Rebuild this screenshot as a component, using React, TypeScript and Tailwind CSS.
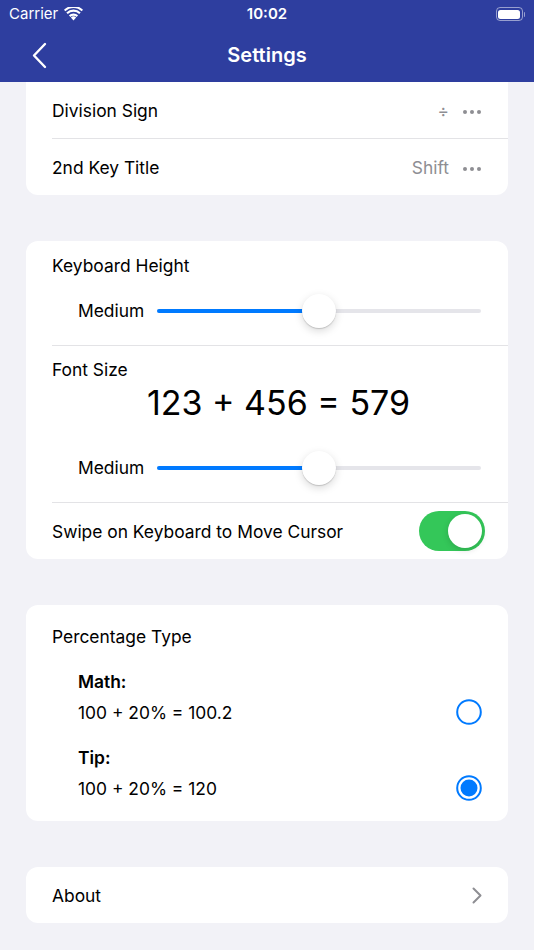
import React from "react";

const font = { fontFamily: "Inter, 'Noto Sans', sans-serif" };

function Slider({ value }: { value: number }) {
  return (
    <div className="relative h-[34px] flex-1 flex items-center">
      <div className="h-[4px] w-full rounded-full bg-[#e5e5ea]" />
      <div
        className="absolute left-0 h-[4px] rounded-full bg-[#007aff]"
        style={{ width: `${value * 100}%` }}
      />
      <div
        className="absolute h-[34px] w-[34px] -translate-x-1/2 rounded-full bg-white shadow-[0_3px_8px_rgba(0,0,0,0.15),0_1px_1px_rgba(0,0,0,0.16)]"
        style={{ left: `${value * 100}%` }}
      />
    </div>
  );
}

function Dots() {
  return (
    <div className="flex items-center gap-[3px]">
      <span className="h-[4px] w-[4px] rounded-full bg-[#8e8e93]" />
      <span className="h-[4px] w-[4px] rounded-full bg-[#8e8e93]" />
      <span className="h-[4px] w-[4px] rounded-full bg-[#8e8e93]" />
    </div>
  );
}

function Radio({ checked }: { checked: boolean }) {
  return (
    <svg width="26" height="26" viewBox="0 0 26 26">
      <circle cx="13" cy="13" r="11.8" fill="none" stroke="#007aff" strokeWidth="2" />
      {checked && <circle cx="13" cy="13" r="8.5" fill="#007aff" />}
    </svg>
  );
}

export default function App() {
  return (
    <div className="flex h-[950px] w-[534px] flex-col bg-[#f2f2f7] text-black" style={font}>
      {/* status + navigation bar */}
      <div className="bg-[#2e3e9f] text-white">
        <div className="relative flex h-[28px] items-center px-[9px]">
          <div className="flex items-center gap-[6px] text-[15px]">
            <span>Carrier</span>
            <svg width="19" height="14" viewBox="0 0 19 14">
              <path d="M9.5 13.5l-2.6-3a3.8 3.8 0 0 1 5.2 0z" fill="white" />
              <path d="M4.9 8.3a6.6 6.6 0 0 1 9.2 0l-1.5 1.7a4.4 4.4 0 0 0-6.2 0z" fill="white" />
              <path d="M2.3 5.4a10.3 10.3 0 0 1 14.4 0l-1.5 1.7a8 8 0 0 0-11.4 0z" fill="white" />
              <path d="M0 2.7a13.7 13.7 0 0 1 19 0l-1.3 1.6a11.6 11.6 0 0 0-16.4 0z" fill="white" />
            </svg>
          </div>
          <div className="absolute left-1/2 -translate-x-1/2 text-[15px] font-semibold">10:02</div>
          <div className="ml-auto flex items-center">
            <div className="flex h-[14px] w-[27px] items-center rounded-[4px] border border-white/50 p-[1.5px]">
              <div className="h-full w-full rounded-[2.5px] bg-white" />
            </div>
            <div className="ml-[1px] h-[5px] w-[1.5px] rounded-r bg-white/50" />
          </div>
        </div>
        <div className="relative flex h-[54px] items-center justify-center">
          <svg className="absolute left-[31px]" width="16" height="27" viewBox="0 0 16 27">
            <path d="M14 2L3 13.5 14 25" fill="none" stroke="white" strokeWidth="2.4" strokeLinecap="round" strokeLinejoin="round" />
          </svg>
          <span className="text-[20px] font-semibold">Settings</span>
        </div>
      </div>

      <div className="flex flex-col px-[26px] text-[17.4px]">
        {/* keyboard keys */}
        <div className="rounded-b-[12px] bg-white">
          <div className="flex h-[56px] items-center pl-[26px] pr-[27px] pt-[3px]">
            <span>Division Sign</span>
            <span className="ml-auto mr-[14px] text-[#8e8e93]">÷</span>
            <Dots />
          </div>
          <div className="ml-[26px] h-px bg-[#e3e3e6]" />
          <div className="flex h-[56px] items-center pl-[26px] pr-[27px] pt-[3px]">
            <span>2nd Key Title</span>
            <span className="ml-auto mr-[14px] text-[#8e8e93]">Shift</span>
            <Dots />
          </div>
        </div>

        {/* keyboard appearance */}
        <div className="mt-[46px] rounded-[12px] bg-white">
          <div className="flex h-[104px] flex-col pl-[26px] pr-[27px]">
            <div className="pt-[14px] leading-[22px]">Keyboard Height</div>
            <div className="mt-[17px] flex items-center pl-[26px]">
              <span className="mr-[13px]">Medium</span>
              <Slider value={0.5} />
            </div>
          </div>
          <div className="ml-[26px] h-px bg-[#e3e3e6]" />
          <div className="flex h-[156px] flex-col pl-[26px] pr-[27px]">
            <div className="pt-[13px] leading-[22px]">Font Size</div>
            <div className="mt-[1px] pl-[24px] text-center text-[34px] leading-[42px]">123 + 456 = 579</div>
            <div className="mt-[27px] flex items-center pl-[26px]">
              <span className="mr-[13px]">Medium</span>
              <Slider value={0.5} />
            </div>
          </div>
          <div className="ml-[26px] h-px bg-[#e3e3e6]" />
          <div className="flex h-[56px] items-center pl-[26px] pr-[23px]">
            <span className="pt-[2px]">Swipe on Keyboard to Move Cursor</span>
            <div className="ml-auto flex h-[40px] w-[66px] items-center justify-end rounded-full bg-[#34c759] p-[3px]">
              <div className="h-[34px] w-[34px] rounded-full bg-white shadow-[0_2px_6px_rgba(0,0,0,0.15)]" />
            </div>
          </div>
        </div>

        {/* percentage */}
        <div className="mt-[46px] flex h-[216px] flex-col rounded-[12px] bg-white pl-[26px] pr-[26px]">
          <div className="pt-[21px] leading-[22px]">Percentage Type</div>
          <div className="mt-[23px] pl-[26px] font-semibold leading-[22px]">Math:</div>
          <div className="mt-[5px] flex items-center pl-[26px] leading-[26px]">
            <span className="pt-[2px]">100 + 20% = 100.2</span>
            <span className="ml-auto">
              <Radio checked={false} />
            </span>
          </div>
          <div className="mt-[21px] pl-[26px] font-semibold leading-[22px]">Tip:</div>
          <div className="mt-[5px] flex items-center pl-[26px] leading-[26px]">
            <span className="pt-[2px]">100 + 20% = 120</span>
            <span className="ml-auto">
              <Radio checked={true} />
            </span>
          </div>
        </div>

        {/* about */}
        <div className="mt-[46px] flex h-[56px] items-center rounded-[12px] bg-white pl-[26px] pr-[26px]">
          <span className="pt-[3px]">About</span>
          <svg className="ml-auto" width="10" height="17" viewBox="0 0 10 17">
            <path d="M1.5 1.5L8.5 8.5 1.5 15.5" fill="none" stroke="#8e8e93" strokeWidth="2" strokeLinecap="round" strokeLinejoin="round" />
          </svg>
        </div>
      </div>
    </div>
  );
}
